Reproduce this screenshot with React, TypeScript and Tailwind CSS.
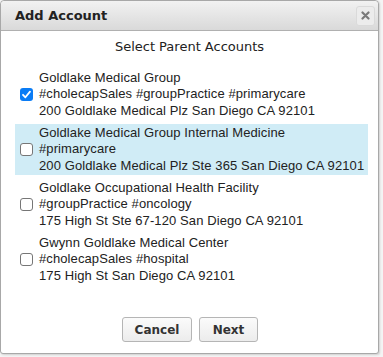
import React from "react";

const items = [
  { name: "Goldlake Medical Group", tags: "#cholecapSales #groupPractice #primarycare", addr: "200 Goldlake Medical Plz San Diego CA 92101", checked: true, hl: false },
  { name: "Goldlake Medical Group Internal Medicine", tags: "#primarycare", addr: "200 Goldlake Medical Plz Ste 365 San Diego CA 92101", checked: false, hl: true },
  { name: "Goldlake Occupational Health Facility", tags: "#groupPractice #oncology", addr: "175 High St Ste 67-120 San Diego CA 92101", checked: false, hl: false },
  { name: "Gwynn Goldlake Medical Center", tags: "#cholecapSales #hospital", addr: "175 High St San Diego CA 92101", checked: false, hl: false },
];

function Check({ checked }: { checked: boolean }) {
  if (checked) {
    return (
      <div className="w-[13px] h-[13px] rounded-[3px] bg-[#0a7cf5] flex items-center justify-center shrink-0">
        <svg width="11" height="11" viewBox="0 0 11 11">
          <path d="M2 5.8 L4.4 8.3 L9 2.6" fill="none" stroke="white" strokeWidth="1.8" strokeLinecap="round" strokeLinejoin="round" />
        </svg>
      </div>
    );
  }
  return <div className="w-[13px] h-[13px] rounded-[3px] border border-[#767676] bg-white shrink-0" />;
}

export default function App() {
  return (
    <div className="w-[383px] h-[357px] bg-[#f4f4f4] relative overflow-hidden" style={{ fontFamily: '"Liberation Sans", Arial, sans-serif' }}>
      <div className="absolute left-[0px] top-[0px] w-[379px] h-[354px] bg-white border border-[#a8a8a8] rounded-t-[4px] rounded-b-[3px] flex flex-col shadow-[1px_1px_2px_rgba(0,0,0,0.15)]">
        <div className="h-[30px] flex items-center justify-between pl-[14px] pr-[3px] border-b border-[#b0b0b0] bg-gradient-to-b from-[#f2f2f2] to-[#d9d9d9] rounded-t-[4px]">
          <span className="text-[13px] font-bold text-[#222]" style={{ fontFamily: '"DejaVu Sans", Verdana, sans-serif' }}>Add Account</span>
          <div className="w-[19px] h-[20px] rounded-[3px] bg-[#ececec] border border-[#dadada] flex items-center justify-center">
            <svg width="9" height="9" viewBox="0 0 9 9">
              <path d="M1.5 1.5 L7.5 7.5 M7.5 1.5 L1.5 7.5" stroke="#7a7a7a" strokeWidth="2.2" strokeLinecap="round" />
            </svg>
          </div>
        </div>
        <div className="text-center text-[13px] text-[#222] mt-[8px] leading-[16px]" style={{ fontFamily: '"DejaVu Sans", Verdana, sans-serif' }}>Select Parent Accounts</div>
        <div className="flex flex-col mt-[14px] pl-[14px] pr-[10px] gap-[4px]">
          {items.map((it, i) => (
            <div key={i} className={`flex items-center gap-[6px] pl-[5px] h-[51px] ${it.hl ? "bg-[#d0ecf6]" : ""}`}>
              <Check checked={it.checked} />
              <div className="text-[13px] leading-[16.5px] text-[#222] whitespace-nowrap tracking-[0.1px]">
                <div>{it.name}</div>
                <div>{it.tags}</div>
                <div>{it.addr}</div>
              </div>
            </div>
          ))}
        </div>
        <div className="flex justify-center gap-[7px] mt-auto mb-[11px] pl-[1px]">
          <button className="w-[70px] h-[25px] rounded-[3px] border border-[#b5b5b5] bg-gradient-to-b from-[#fbfbfb] to-[#ececec] text-[12px] font-bold text-[#333]" style={{ fontFamily: '"DejaVu Sans", Verdana, sans-serif' }}>Cancel</button>
          <button className="w-[59px] h-[25px] rounded-[3px] border border-[#b5b5b5] bg-gradient-to-b from-[#fbfbfb] to-[#ececec] text-[12px] font-bold text-[#333]" style={{ fontFamily: '"DejaVu Sans", Verdana, sans-serif' }}>Next</button>
        </div>
      </div>
    </div>
  );
}
